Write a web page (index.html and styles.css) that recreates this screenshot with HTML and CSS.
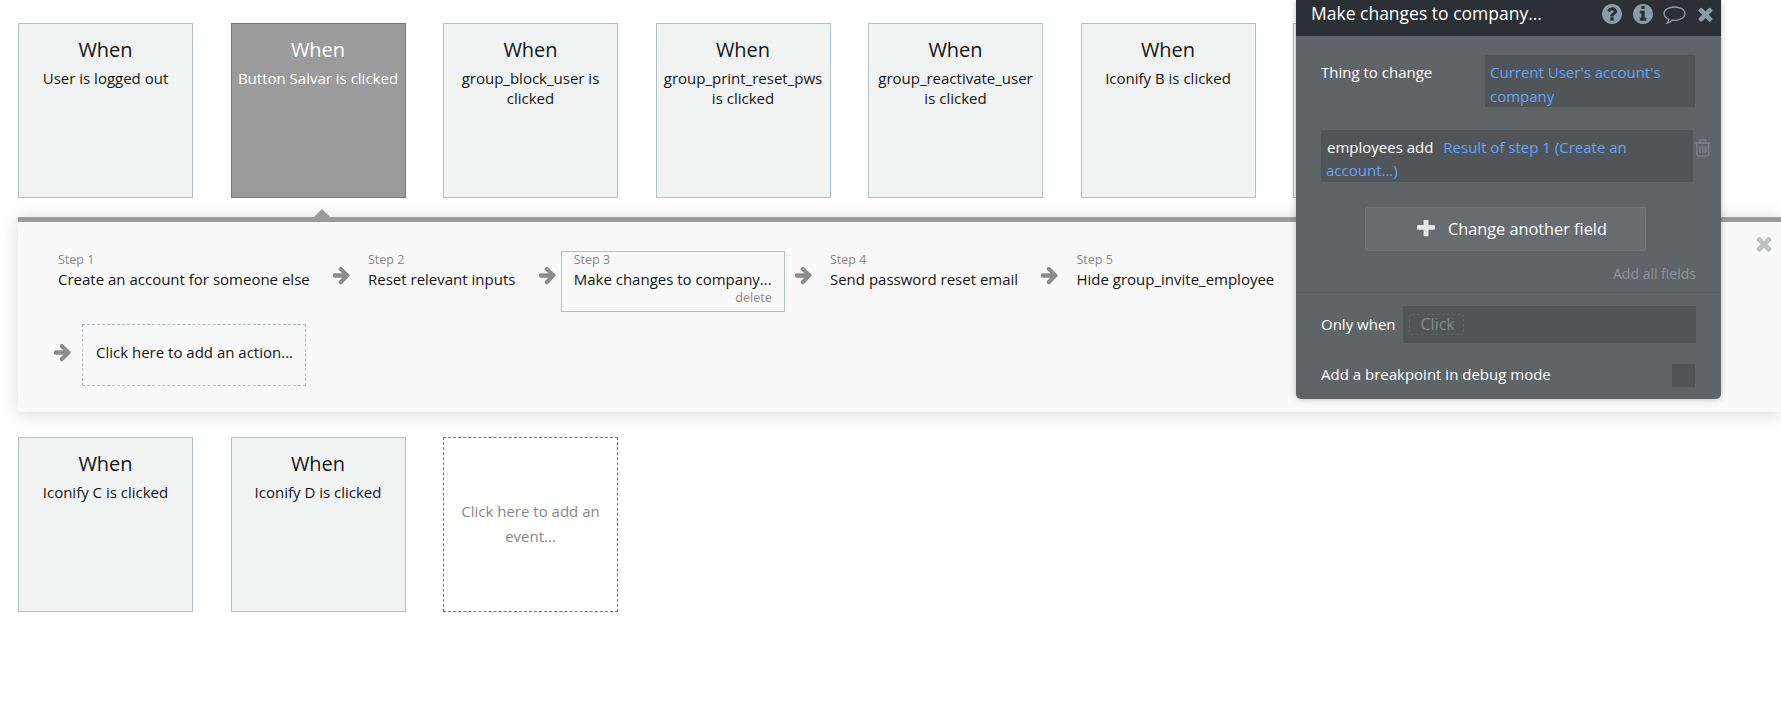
FILE: index.html
```html
<!DOCTYPE html>
<html lang="en">
<head>
<meta charset="utf-8">
<title>Workflow editor</title>
<link rel="stylesheet" href="styles.css">
</head>
<body>
<svg class="sprite" aria-hidden="true">
  <symbol id="i-arrow" viewBox="128 200 1500 1392"><path d="M1600 960q0 54-37 91l-651 651q-39 37-91 37-51 0-90-37l-75-75q-38-38-38-91t38-91l293-293h-704q-52 0-84.5-37.5t-32.5-90.5v-128q0-53 32.5-90.5t84.5-37.5h704l-293-294q-38-36-38-90t38-90l75-75q38-38 90-38 53 0 91 38l651 651q37 35 37 90z" transform="translate(0 -104)"/></symbol>
  <symbol id="i-times" viewBox="280 220 1232 1352"><path d="M1490 1322q0 40-28 68l-136 136q-28 28-68 28t-68-28l-294-294-294 294q-28 28-68 28t-68-28l-136-136q-28-28-28-68t28-68l294-294-294-294q-28-28-28-68t28-68l136-136q28-28 68-28t68 28l294 294 294-294q28-28 68-28t68 28l136 136q28 28 28 68t-28 68l-294 294 294 294q28 28 28 68z"/></symbol>
  <symbol id="i-plus" viewBox="192 192 1408 1408"><path d="M1600 736v192q0 40-28 68t-68 28h-416v416q0 40-28 68t-68 28h-192q-40 0-68-28t-28-68v-416h-416q-40 0-68-28t-28-68v-192q0-40 28-68t68-28h416v-416q0-40 28-68t68-28h192q40 0 68 28t28 68v416h416q40 0 68 28t28 68z" transform="translate(0 -64)"/></symbol>
  <symbol id="i-question" viewBox="128 128 1536 1536"><path d="M1024 1376v-192q0-14-9-23t-23-9h-192q-14 0-23 9t-9 23v192q0 14 9 23t23 9h192q14 0 23-9t9-23zm256-672q0-88-55.5-163t-138.5-116-170-41q-243 0-371 213-15 24 8 42l132 100q7 6 19 6 16 0 25-12 53-68 86-92 34-24 86-24 48 0 85.5 26t37.5 59q0 38-20 61t-68 45q-63 28-115.5 86.5t-52.5 125.5v36q0 14 9 23t23 9h192q14 0 23-9t9-23q0-19 21.5-49.5t54.5-49.5q32-18 49-28.5t46-35 44.5-48 28-60.5 12.5-81zm384 192q0 209-103 385.5t-279.5 279.5-385.5 103-385.5-103-279.5-279.5-103-385.5 103-385.5 279.5-279.5 385.5-103 385.5 103 279.5 279.5 103 385.5z"/></symbol>
  <symbol id="i-info" viewBox="128 128 1536 1536"><path d="M1152 1376v-160q0-14-9-23t-23-9h-96v-512q0-14-9-23t-23-9h-320q-14 0-23 9t-9 23v160q0 14 9 23t23 9h96v320h-96q-14 0-23 9t-9 23v160q0 14 9 23t23 9h448q14 0 23-9t9-23zm-128-896v-160q0-14-9-23t-23-9h-192q-14 0-23 9t-9 23v160q0 14 9 23t23 9h192q14 0 23-9t9-23zm640 416q0 209-103 385.5t-279.5 279.5-385.5 103-385.5-103-279.5-279.5-103-385.5 103-385.5 279.5-279.5 385.5-103 385.5 103 279.5 279.5 103 385.5z"/></symbol>
  <symbol id="i-trash" viewBox="128 128 1408 1536"><path d="M704 736v576q0 14-9 23t-23 9h-64q-14 0-23-9t-9-23v-576q0-14 9-23t23-9h64q14 0 23 9t9 23zm256 0v576q0 14-9 23t-23 9h-64q-14 0-23-9t-9-23v-576q0-14 9-23t23-9h64q14 0 23 9t9 23zm256 0v576q0 14-9 23t-23 9h-64q-14 0-23-9t-9-23v-576q0-14 9-23t23-9h64q14 0 23 9t9 23zm128 724v-948h-896v948q0 22 7 40.5t14.5 27 10.5 8.5h832q3 0 10.5-8.5t14.5-27 7-40.5zm-672-1076h448l-48-117q-7-9-17-11h-317q-10 2-17 11zm928 32v64q0 14-9 23t-23 9h-96v948q0 83-47 143.5t-113 60.5h-832q-66 0-113-58.5t-47-141.5v-952h-96q-14 0-23-9t-9-23v-64q0-14 9-23t23-9h309l70-167q15-37 54-63t79-26h320q40 0 79 26t54 63l70 167h309q14 0 23 9t9 23z"/></symbol>
</svg>

<main class="canvas">
  <section class="events">
    <article class="event"><h3 class="event-title">When</h3><p class="event-desc">User is logged out</p></article>
    <article class="event event-active"><h3 class="event-title">When</h3><p class="event-desc">Button Salvar is clicked</p></article>
    <article class="event"><h3 class="event-title">When</h3><p class="event-desc">group_block_user is clicked</p></article>
    <article class="event"><h3 class="event-title">When</h3><p class="event-desc">group_print_reset_pws is clicked</p></article>
    <article class="event"><h3 class="event-title">When</h3><p class="event-desc">group_reactivate_user is clicked</p></article>
    <article class="event"><h3 class="event-title">When</h3><p class="event-desc">Iconify B is clicked</p></article>
    <article class="event"></article>
  </section>

  <section class="band">
    <div class="steps">
      <div class="step"><span class="step-label">Step 1</span><span class="step-name">Create an account for someone else</span></div>
      <svg class="arrow"><use href="#i-arrow"/></svg>
      <div class="step"><span class="step-label">Step 2</span><span class="step-name">Reset relevant inputs</span></div>
      <svg class="arrow"><use href="#i-arrow"/></svg>
      <div class="step step-selected"><span class="step-label">Step 3</span><span class="step-name">Make changes to company...</span><span class="step-delete">delete</span></div>
      <svg class="arrow"><use href="#i-arrow"/></svg>
      <div class="step"><span class="step-label">Step 4</span><span class="step-name">Send password reset email</span></div>
      <svg class="arrow"><use href="#i-arrow"/></svg>
      <div class="step"><span class="step-label">Step 5</span><span class="step-name">Hide group_invite_employee</span></div>
    </div>
    <div class="add-row">
      <svg class="arrow arrow-add"><use href="#i-arrow"/></svg>
      <div class="add-action">Click here to add an action...</div>
    </div>
    <svg class="band-close"><use href="#i-times"/></svg>
  </section>

  <section class="events events-second">
    <article class="event"><h3 class="event-title">When</h3><p class="event-desc">Iconify C is clicked</p></article>
    <article class="event"><h3 class="event-title">When</h3><p class="event-desc">Iconify D is clicked</p></article>
    <article class="event event-add">Click here to add an event...</article>
  </section>
</main>

<aside class="palette">
  <header class="palette-head">
    <span class="palette-title">Make changes to company...</span>
    <svg class="head-icon icon-q"><use href="#i-question"/></svg>
    <svg class="head-icon icon-i"><use href="#i-info"/></svg>
    <svg class="head-icon icon-c" viewBox="0 0 23 18"><path d="M11.5 1C5.9 1 1 3.6 1 7.6c0 2.6 2.2 4.6 4.8 5.7-.2 1.4-.9 2.7-1.9 3.8 2-.4 3.9-1.5 5.2-2.9.8.1 1.6.2 2.4.2 5.6 0 10.5-2.8 10.5-6.8S17.1 1 11.5 1z"/></svg>
    <svg class="head-icon icon-x"><use href="#i-times"/></svg>
  </header>

  <div class="thing-row">
    <span class="thing-label">Thing to change</span>
    <div class="thing-input">Current User's account's company</div>
  </div>

  <div class="field-row">
    <div class="field"><span class="field-name">employees add</span> <span class="field-value">Result of step 1 (Create an account...)</span></div>
    <svg class="trash"><use href="#i-trash"/></svg>
  </div>

  <button class="change-btn" type="button"><svg class="plus"><use href="#i-plus"/></svg>Change another field</button>
  <div class="all-fields">Add all fields</div>

  <div class="palette-foot">
    <div class="only-row">
      <span class="only-label">Only when</span>
      <div class="only-input"><span class="click-chip">Click</span></div>
    </div>
    <div class="debug-row">
      <span class="debug-label">Add a breakpoint in debug mode</span>
      <span class="debug-check"></span>
    </div>
  </div>
</aside>
</body>
</html>
```
FILE: styles.css
```css
* { box-sizing: border-box; }
html, body { margin: 0; height: 100%; }
body {
  width: 1781px;
  height: 719px;
  overflow: hidden;
  position: relative;
  background: #fff;
  color: #151515;
  font-family: "Open Sans", "Noto Sans", sans-serif;
  font-size: 15px;
  line-height: 20px;
}
.sprite { position: absolute; width: 0; height: 0; }

.canvas { padding: 23px 0 0 18px; }

.events { display: flex; gap: 37.5px; }
.events-second { margin-top: 25px; }

.event {
  flex: none;
  width: 175px;
  height: 175px;
  padding: 14px 4px 0;
  background: #f1f3f3;
  border: 1px solid #b3bfc4;
  text-align: center;
}
.event-title { margin: 0; font-size: 20px; font-weight: 400; line-height: 24px; }
.event-desc { margin: 6px 0 0; }
.event-active { background: #9b9b9b; border-color: #777; color: #fff; }
.event-add {
  display: flex;
  align-items: center;
  padding: 0 14px 2px;
  background: #fff;
  border: 1px dashed #777;
  color: #888;
  line-height: 25px;
}

.band {
  position: relative;
  margin-top: 19px;
  height: 195px;
  padding: 29px 0 0 27px;
  background: #f9f9f9;
  border-top: 5px solid #9b9b9b;
  box-shadow: 0 2px 18px rgba(0, 0, 0, .16);
}
.band::before {
  content: "";
  position: absolute;
  left: 296px;
  top: -13px;
  border-left: 8px solid transparent;
  border-right: 8px solid transparent;
  border-bottom: 8px solid #9b9b9b;
}
.band-close { position: absolute; left: 1738px; top: 13px; width: 16px; height: 17px; fill: #b8c2c5; }

.steps { display: flex; align-items: flex-start; }
.step {
  display: flex;
  flex-direction: column;
  height: 61px;
  padding: 0 12px;
  border: 1px solid transparent;
}
.step-selected { border-color: #b3bfc4; }
.step-label { font-size: 12.5px; line-height: 15px; color: #8a8a8a; }
.step-name { margin-top: 2px; white-space: nowrap; }
.step-delete { align-self: flex-end; margin-top: 1px; font-size: 12.5px; line-height: 16px; color: #8a8a8a; }

.arrow { flex: none; width: 17px; height: 18px; margin: 16px 5px 0 10.3px; fill: #8c8c8c; }

.add-row { display: flex; align-items: flex-start; margin-top: 12px; }
.arrow-add { margin: 20px 11px 0 9px; }
.add-action {
  display: flex;
  align-items: center;
  width: 224px;
  height: 62px;
  padding: 0 13px 6px;
  border: 1px dashed #b3bfc4;
  white-space: nowrap;
}

.palette {
  position: absolute;
  left: 1296px;
  top: 0;
  width: 425px;
  height: 399px;
  background: #5f6467;
  color: #fff;
  border-radius: 0 0 5px 5px;
  box-shadow: 0 0 6px rgba(0, 0, 0, .25);
}
.palette-head {
  display: flex;
  align-items: center;
  height: 36px;
  padding-left: 15px;
  background: #2a3033;
}
.palette-title { flex: 1; margin-top: -10px; font-size: 17.5px; line-height: 26px; }
.head-icon { flex: none; fill: #8b9ca5; }
.icon-q { width: 20px; height: 20px; margin-right: 11px; margin-top: -8px; }
.icon-i { width: 20px; height: 20px; margin-right: 10px; margin-top: -8px; }
.icon-c { width: 23px; height: 18px; margin-right: 12px; margin-top: -6px; fill: none; stroke: #8b9ca5; stroke-width: 1.3; }
.icon-x { width: 15px; height: 16px; margin-right: 8px; margin-top: -8px; }

.thing-row { display: flex; justify-content: space-between; margin: 19px 26px 0 25px; }
.thing-label { margin-top: 5px; line-height: 24px; }
.thing-input {
  width: 210px;
  height: 52px;
  padding: 5px 5px 0;
  background: #515558;
  color: #62a5fb;
  line-height: 24px;
}

.field-row { display: flex; align-items: flex-start; margin: 23px 0 0 25px; }
.field {
  width: 372px;
  height: 52px;
  padding: 6px 5px 0;
  background: #515558;
  line-height: 23px;
}
.field-name { margin: 0 6px 0 1px; }
.field-value { color: #62a5fb; }
.trash { flex: none; width: 16px; height: 18px; margin: 9px 0 0 1px; fill: #7a8084; }

.change-btn {
  display: flex;
  align-items: center;
  width: 281px;
  height: 44px;
  margin: 25px 0 0 69px;
  padding: 0 0 0 51px;
  background: #676c6f;
  border: 1px solid #6f7477;
  border-radius: 2px;
  color: #fff;
  font: inherit;
  font-size: 16.3px;
}
.plus { width: 18px; height: 18px; margin-right: 13px; fill: #e6e6e6; }

.all-fields { margin-top: 13px; padding-right: 25px; font-size: 14px; color: #8f9497; text-align: right; }

.palette-foot { margin-top: 8px; padding: 13px 25px 0; border-top: 1px solid #565b5e; }
.only-row { display: flex; align-items: center; gap: 7px; }
.only-label { margin-top: -2px; }
.only-input {
  display: flex;
  align-items: center;
  flex: 1;
  height: 37px;
  padding-left: 6px;
  background: #515558;
}
.click-chip {
  width: 55px;
  height: 21px;
  padding-left: 11px;
  border: 1px dashed #5f6467;
  border-radius: 3px;
  font-size: 16px;
  line-height: 19px;
  color: #85898c;
}
.debug-row { display: flex; align-items: center; justify-content: space-between; margin-top: 21px; padding-right: 1px; }
.debug-label { margin-top: -3px; }
.debug-check { width: 23px; height: 23px; background: #515558; }
```
